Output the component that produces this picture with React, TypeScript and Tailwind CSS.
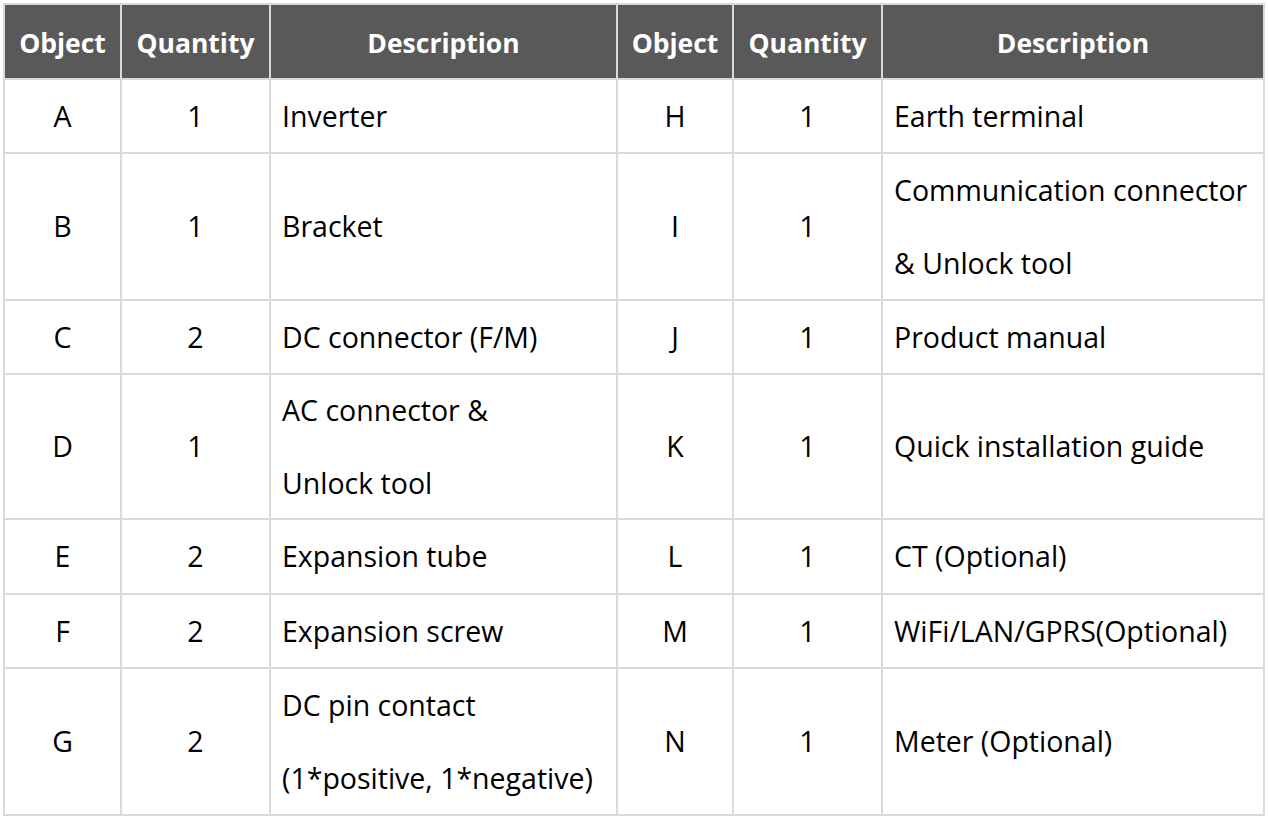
import React from "react";

type Row = { h: string; a: [string, string, string[]]; b: [string, string, string[]] };

const rows: Row[] = [
  { h: "h-[74px]", a: ["A", "1", ["Inverter"]], b: ["H", "1", ["Earth terminal"]] },
  { h: "h-[147px]", a: ["B", "1", ["Bracket"]], b: ["I", "1", ["Communication connector", "& Unlock tool"]] },
  { h: "h-[74px]", a: ["C", "2", ["DC connector (F/M)"]], b: ["J", "1", ["Product manual"]] },
  { h: "h-[145px]", a: ["D", "1", ["AC connector &", "Unlock tool"]], b: ["K", "1", ["Quick installation guide"]] },
  { h: "h-[75px]", a: ["E", "2", ["Expansion tube"]], b: ["L", "1", ["CT (Optional)"]] },
  { h: "h-[74px]", a: ["F", "2", ["Expansion screw"]], b: ["M", "1", ["WiFi/LAN/GPRS(Optional)"]] },
  { h: "h-[147px]", a: ["G", "2", ["DC pin contact", "(1*positive, 1*negative)"]], b: ["N", "1", ["Meter (Optional)"]] },
];

const td = "border-2 border-[#d9d9d9] p-0";
const th = "border-2 border-[#d9d9d9] bg-[#595959] text-white font-bold text-[26.5px] pt-[5px] px-0 pb-0";

function Desc({ lines }: { lines: string[] }) {
  return (
    <td className={`${td} text-left pl-[11px] pr-0`}>
      <div className="flex flex-col justify-center h-[60px]">
        {lines.map((l, i) => (
          <div key={i} className="leading-[73px] whitespace-nowrap">
            {l}
          </div>
        ))}
      </div>
    </td>
  );
}

export default function App() {
  return (
    <div className="bg-white w-[1268px] h-[820px] pt-[3px] pl-[3px]" style={{ fontFamily: '"Open Sans", sans-serif' }}>
      <table className="border-collapse text-black text-[28.5px] table-fixed w-[1260px]">
        <colgroup>
          <col className="w-[117px]" />
          <col className="w-[149px]" />
          <col className="w-[347px]" />
          <col className="w-[116px]" />
          <col className="w-[149px]" />
          <col className="w-[382px]" />
        </colgroup>
        <thead>
          <tr className="h-[75px]">
            <th className={th}>Object</th>
            <th className={th}>Quantity</th>
            <th className={th}>Description</th>
            <th className={th}>Object</th>
            <th className={th}>Quantity</th>
            <th className={th}>Description</th>
          </tr>
        </thead>
        <tbody>
          {rows.map((r, i) => (
            <tr key={i} className={r.h}>
              <td className={`${td} text-center`}>{r.a[0]}</td>
              <td className={`${td} text-center`}>{r.a[1]}</td>
              <Desc lines={r.a[2]} />
              <td className={`${td} text-center`}>{r.b[0]}</td>
              <td className={`${td} text-center`}>{r.b[1]}</td>
              <Desc lines={r.b[2]} />
            </tr>
          ))}
        </tbody>
      </table>
    </div>
  );
}
